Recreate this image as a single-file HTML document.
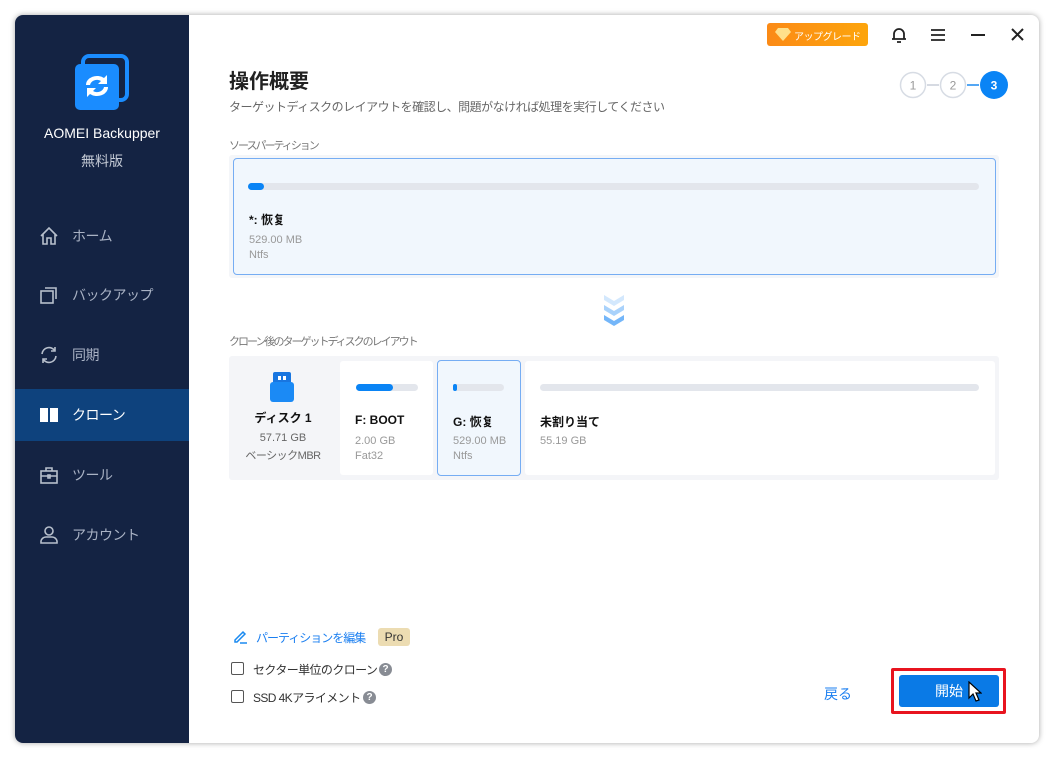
<!DOCTYPE html>
<html><head><meta charset="utf-8"><style>
*{margin:0;padding:0;box-sizing:border-box}
body{width:1054px;height:758px;background:#fff;font-family:"Liberation Sans","Noto Sans CJK JP",sans-serif;position:relative;overflow:hidden}
.win{position:absolute;left:15px;top:15px;width:1024px;height:728px;background:#fff;border-radius:8px;box-shadow:0 0 6px rgba(0,0,0,.35);overflow:hidden}
.side{position:absolute;left:0;top:0;width:174px;height:728px;background:#142343}
.abs{position:absolute}
.nav{position:absolute;left:0;width:174px;height:52px;display:flex;align-items:center;color:#a9b2c4;font-size:14px;letter-spacing:-0.5px}
.nav svg{margin-left:24px;margin-right:13px}
.nav.act{background:#0e427d;color:#fff}
.t{position:absolute;white-space:nowrap}
.bar{position:absolute;height:7px;border-radius:4px;background:#e3e6ec}
.bar i{position:absolute;left:0;top:0;height:7px;border-radius:4px;background:#0a84f5}
.cb{position:absolute;width:13px;height:13px;border:1.5px solid #555;border-radius:2px}
.q{position:absolute;width:13px;height:13px;border-radius:50%;background:#888c94;color:#fff;font-size:10px;font-weight:bold;text-align:center;line-height:13px}
</style></head><body>
<div class="win">
<div class="side">
 <svg class="abs" style="left:57px;top:38px" width="60" height="60" viewBox="0 0 60 60">
  <rect x="11" y="3" width="44" height="44" rx="6" fill="none" stroke="#1a8cff" stroke-width="4"/>
  <rect x="3" y="11" width="44" height="46" rx="5" fill="#1a8cff"/>
  <path d="M14 32a11 9 0 0 1 18-7l3-3v9h-9l3-3a7 6 0 0 0-11 4z" fill="#fff"/>
  <path d="M36 34a11 9 0 0 1-18 7l-3 3v-9h9l-3 3a7 6 0 0 0 11-4z" fill="#fff"/>
 </svg>
 <div class="t" style="left:0;width:174px;text-align:center;top:110px;color:#fff;font-size:14px">AOMEI Backupper</div>
 <div class="t" style="left:0;width:174px;text-align:center;top:136px;color:#c3c9d4;font-size:14px">無料版</div>
 <div class="nav" style="top:195px"><svg width="20" height="20" viewBox="0 0 20 20" fill="none" stroke="#b7bfcc" stroke-width="1.6"><path d="M2 10L10 2l8 8M4 8v10h4v-6h4v6h4V8"/></svg>ホーム</div>
 <div class="nav" style="top:254px"><svg width="20" height="20" viewBox="0 0 20 20" fill="none" stroke="#b7bfcc" stroke-width="1.6"><rect x="2" y="6" width="12" height="12"/><path d="M6 3h11v11"/></svg>バックアップ</div>
 <div class="nav" style="top:314px"><svg width="20" height="20" viewBox="0 0 20 20" fill="none" stroke="#b7bfcc" stroke-width="1.6"><path d="M3 9a7 7 0 0 1 13-3M17 11a7 7 0 0 1-13 3M16 2v4h-4M4 18v-4h4"/></svg>同期</div>
 <div class="nav act" style="top:374px"><svg width="20" height="20" viewBox="0 0 20 20"><rect x="1" y="3" width="8" height="14" fill="#fff"/><rect x="11" y="3" width="8" height="14" fill="#fff"/></svg>クローン</div>
 <div class="nav" style="top:434px"><svg width="20" height="20" viewBox="0 0 20 20" fill="none" stroke="#b7bfcc" stroke-width="1.6"><rect x="2" y="6" width="16" height="12"/><path d="M7 6V3h6v3M2 11h16M9 10h2v3H9z"/></svg>ツール</div>
 <div class="nav" style="top:494px"><svg width="20" height="20" viewBox="0 0 20 20" fill="none" stroke="#b7bfcc" stroke-width="1.6"><circle cx="10" cy="6" r="4"/><path d="M2 18v-2a5 5 0 0 1 5-4h6a5 5 0 0 1 5 4v2z"/></svg>アカウント</div>
</div>
<div class="abs" style="left:752px;top:8px;width:101px;height:23px;border-radius:3px;background:linear-gradient(90deg,#fb8a16,#fda50c)"></div>
<svg class="abs" style="left:760px;top:13px" width="16" height="13" viewBox="0 0 16 13"><path d="M3 0h10l3 4-8 9-8-9z" fill="#ffe08a"/></svg>
<div class="t" style="left:779px;top:13px;color:#fff;font-size:10px;letter-spacing:-0.5px">アップグレード</div>
<svg class="abs" style="left:876px;top:12px" width="16" height="17" viewBox="0 0 16 17" fill="none" stroke="#222" stroke-width="1.8"><path d="M3 12V7a5 5 0 0 1 10 0v5zM1 12h14M6 15h4"/></svg>
<svg class="abs" style="left:916px;top:14px" width="14" height="12" stroke="#222" stroke-width="1.8"><path d="M0 1h14M0 6h14M0 11h14"/></svg>
<svg class="abs" style="left:956px;top:19px" width="14" height="3" stroke="#222" stroke-width="2"><path d="M0 1h14"/></svg>
<svg class="abs" style="left:996px;top:13px" width="13" height="13" stroke="#222" stroke-width="2"><path d="M1 1l11 11M12 1L1 12"/></svg>
<svg class="abs" style="left:884px;top:56px" width="112" height="28" viewBox="0 0 112 28"><path d="M28 14h12" stroke="#c8ced8" stroke-width="1.5"/><path d="M68 14h12" stroke="#1b8af0" stroke-width="1.5"/>
<circle cx="14" cy="14" r="12.5" fill="#fff" stroke="#d7dce4" stroke-width="1.5"/><circle cx="54" cy="14" r="12.5" fill="#fff" stroke="#d7dce4" stroke-width="1.5"/><circle cx="95" cy="14" r="14" fill="#0a84f5"/>
<text x="14" y="18.5" font-size="12" fill="#999" text-anchor="middle" font-family="Liberation Sans">1</text><text x="54" y="18.5" font-size="12" fill="#999" text-anchor="middle" font-family="Liberation Sans">2</text><text x="95" y="18.5" font-size="12" fill="#fff" font-weight="bold" text-anchor="middle" font-family="Liberation Sans">3</text></svg>
<div class="t" style="left:214px;top:50px;font-size:20px;font-weight:bold;color:#222">操作概要</div>
<div class="t" style="left:214px;top:83px;font-size:12px;letter-spacing:-0.5px;color:#666">ターゲットディスクのレイアウトを確認し、問題がなければ処理を実行してください</div>
<div class="t" style="left:214px;top:122px;font-size:11px;letter-spacing:-2px;color:#777">ソースパーティション</div>
<div class="abs" style="left:214px;top:140px;width:770px;height:123px;background:#f4f6f9;border-radius:3px"></div>
<div class="abs" style="left:218px;top:143px;width:763px;height:117px;background:#f1f7fd;border:1.5px solid #76adf3;border-radius:4px"></div>
<div class="bar" style="left:233px;top:168px;width:731px"><i style="width:16px"></i></div>
<div class="t" style="left:234px;top:196px;font-size:12px;font-weight:bold;color:#111">*: 恢复</div>
<div class="t" style="left:234px;top:219px;font-size:11px;color:#999">529.00 MB</div>
<div class="t" style="left:234px;top:234px;font-size:11px;color:#999">Ntfs</div>
<svg class="abs" style="left:589px;top:280px" width="20" height="31" viewBox="0 0 20 31"><path d="M0 0l10 6 10-6v5l-10 6L0 5z" fill="#d3e8fd"/><path d="M0 10l10 6 10-6v5l-10 6L0 15z" fill="#a9d2fb"/><path d="M0 20l10 6 10-6v5l-10 6L0 25z" fill="#74b6f9"/></svg>
<div class="t" style="left:214px;top:318px;font-size:11px;letter-spacing:-2px;color:#777">クローン後のターゲットディスクのレイアウト</div>
<div class="abs" style="left:214px;top:341px;width:770px;height:124px;background:#f4f5f8;border-radius:3px"></div>
<svg class="abs" style="left:254px;top:357px" width="26" height="32" viewBox="0 0 26 32"><rect x="4" y="0" width="18" height="12" rx="2" fill="#1976e0"/><rect x="9" y="4" width="3" height="4" fill="#fff"/><rect x="14" y="4" width="3" height="4" fill="#fff"/><rect x="1" y="10" width="24" height="20" rx="3" fill="#1b8af5"/></svg>
<div class="t" style="left:214px;top:394px;width:108px;text-align:center;font-size:12px;font-weight:bold;color:#111">ディスク 1</div>
<div class="t" style="left:214px;top:417px;width:108px;text-align:center;font-size:11px;color:#666">57.71 GB</div>
<div class="t" style="left:214px;top:432px;width:108px;text-align:center;font-size:11px;letter-spacing:-0.5px;color:#666">ベーシックMBR</div>
<div class="abs" style="left:325px;top:346px;width:93px;height:114px;background:#fff;border-radius:3px"></div>
<div class="bar" style="left:341px;top:369px;width:62px"><i style="width:37px"></i></div>
<div class="t" style="left:340px;top:398px;font-size:12px;font-weight:bold;color:#111">F: BOOT</div>
<div class="t" style="left:340px;top:420px;font-size:11px;color:#999">2.00 GB</div>
<div class="t" style="left:340px;top:435px;font-size:11px;color:#999">Fat32</div>
<div class="abs" style="left:422px;top:345px;width:84px;height:116px;background:#f1f7fd;border:1.5px solid #76adf3;border-radius:4px"></div>
<div class="bar" style="left:438px;top:369px;width:51px"><i style="width:4px"></i></div>
<div class="t" style="left:438px;top:398px;font-size:12px;font-weight:bold;color:#111">G: 恢复</div>
<div class="t" style="left:438px;top:420px;font-size:11px;color:#999">529.00 MB</div>
<div class="t" style="left:438px;top:435px;font-size:11px;color:#999">Ntfs</div>
<div class="abs" style="left:510px;top:346px;width:470px;height:114px;background:#fff;border-radius:3px"></div>
<div class="bar" style="left:525px;top:369px;width:439px"></div>
<div class="t" style="left:525px;top:398px;font-size:12px;font-weight:bold;color:#111">未割り当て</div>
<div class="t" style="left:525px;top:420px;font-size:11px;color:#999">55.19 GB</div>
<svg class="abs" style="left:218px;top:614px" width="15" height="15" viewBox="0 0 15 15" fill="none" stroke="#1b8af0" stroke-width="1.5"><path d="M2 11l8-8 2 2-8 8H2zM7 14h7"/></svg>
<div class="t" style="left:241px;top:614px;font-size:12px;letter-spacing:-1px;color:#1b7ff0">パーティションを編集</div>
<div class="abs" style="left:363px;top:613px;width:32px;height:18px;border-radius:3px;background:#ecdcb2;font-size:12px;color:#333;text-align:center;line-height:18px">Pro</div>
<div class="cb" style="left:216px;top:647px"></div>
<div class="t" style="left:238px;top:646px;font-size:12px;letter-spacing:-0.6px;color:#333">セクター単位のクローン</div>
<div class="q" style="left:364px;top:648px">?</div>
<div class="cb" style="left:216px;top:675px"></div>
<div class="t" style="left:238px;top:674px;font-size:12px;letter-spacing:-0.6px;color:#333">SSD 4Kアライメント</div>
<div class="q" style="left:348px;top:676px">?</div>
<div class="t" style="left:809px;top:669px;font-size:14px;color:#1b7ff0">戻る</div>
<div class="abs" style="left:876px;top:653px;width:115px;height:46px;border:3px solid #e8141f;border-radius:2px"></div>
<div class="abs" style="left:884px;top:660px;width:100px;height:32px;background:#0a7ae6;border-radius:3px;color:#fff;font-size:14px;text-align:center;line-height:32px">開始</div>
<svg class="abs" style="left:953px;top:666px" width="14" height="22" viewBox="0 0 14 22"><path d="M1 1v16l4-4 3 7 3-1-3-7h5z" fill="#fff" stroke="#000" stroke-width="1.2"/></svg>
</div>
</body></html>
